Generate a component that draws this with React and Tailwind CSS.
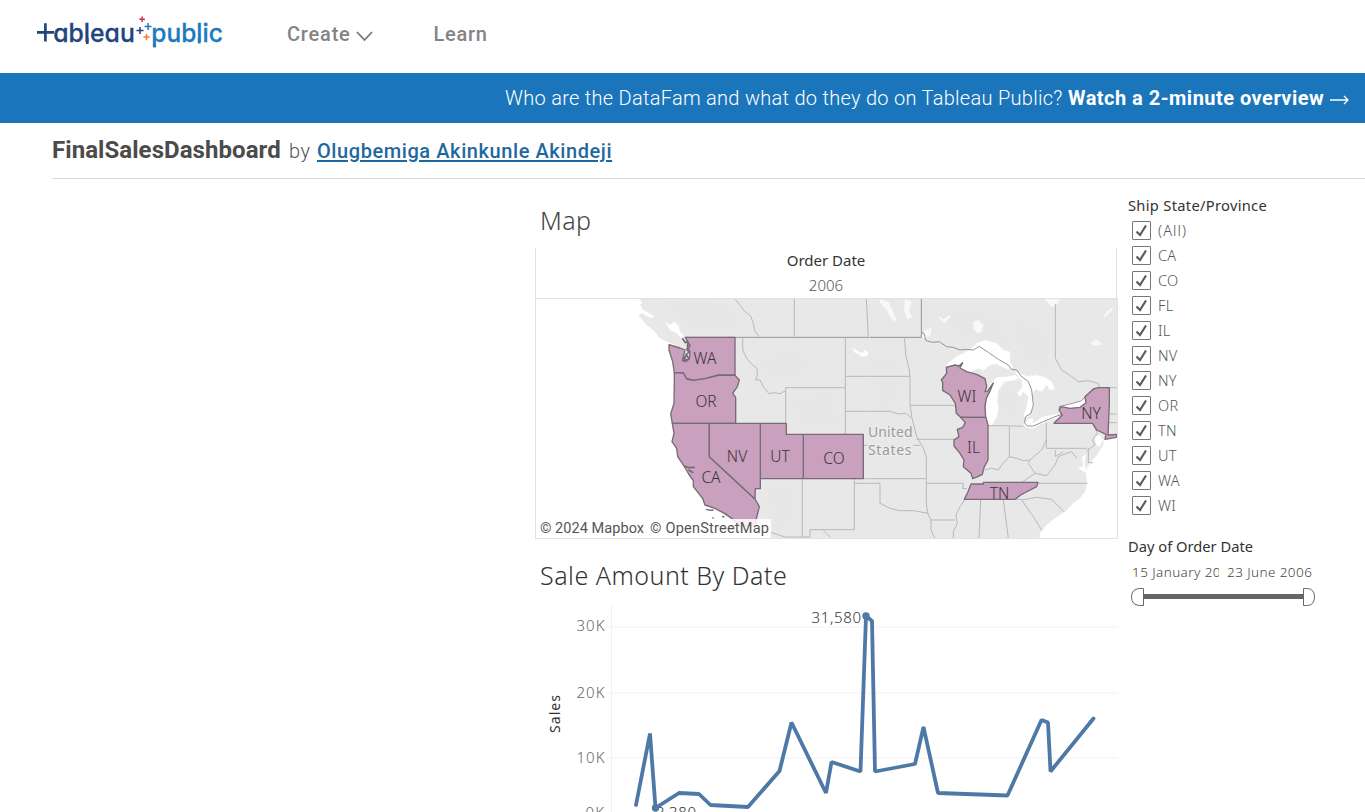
import React from "react";

const states = ["(All)", "CA", "CO", "FL", "IL", "NV", "NY", "OR", "TN", "UT", "WA", "WI"];
const T = { fontFamily: '"Noto Sans", sans-serif' };

function Logo() {
  return (
    <svg width="190" height="38" viewBox="35 12 190 38" className="block" fontFamily="Inter, sans-serif" fontWeight="500" role="img" aria-label="tableau public">
      <path d="M37 32.3H54M45.400 23.200V41.600" stroke="#1f447e" strokeWidth="2.700" fill="none" />
      <g className="[font-feature-settings:'cv11']" fontSize="25.500" strokeWidth=".3">
        <text x="53.300" y="41.5" textLength="81.500" lengthAdjust="spacingAndGlyphs" fill="#1f447e" stroke="#1f447e">ableau</text>
        <text x="151.300" y="41.5" textLength="71.500" lengthAdjust="spacingAndGlyphs" fill="#1c7ac0" stroke="#1c7ac0">public</text>
      </g>
      <path d="M87.300 38V44" stroke="#1f447e" strokeWidth="2.600" />
      <path d="M199.200 38V43.500" stroke="#1c7ac0" strokeWidth="2.600" />
      <path d="M154.500 44V47.500" stroke="#1c7ac0" strokeWidth="2.600" />
      <g fill="none" strokeWidth="1.5">
        <path d="M136.500 30.500h7M140 27v7" stroke="#1f447e" />
        <path d="M139.300 19.200h5.600M142.100 16.400v5.600" stroke="#d0304c" />
        <path d="M144.600 26.400h7M148.100 22.900v7" stroke="#1c7ac0" />
        <path d="M143.400 37.100h6.200M146.500 34v6.200" stroke="#f0803c" />
      </g>
    </svg>
  );
}

function UsMap() {
  return (
    <svg width="581" height="239" viewBox="536 299 581 239" className="block" style={T}>
      <rect x="536" y="299" width="581" height="240" fill="#fff" />
      <g transform="translate(630 290) scale(.333333)">
        <path fill="#e8e8e8" d="M28 27H750V760H430L420 735L310 690 290 680 270 665 250 652 225 645 210 620 192 590 190 572 176 552 160 525 143 500 140 475 126 455 132 430 127 400 122 372 132 340 133 270 133 240 128 215 117 180 117 165 145 168 118 158 90 145 72 122 50 105 25 75 35 70 65 85 72 78 40 60 30 45 38 38Z" />
        <path fill="#fff" d="M105 94L120 106 132 95 145 105 150 123 162 140 153 145 140 130 120 120Z" />
        <path fill="#e5e5e5" opacity=".5" d="M110 35L200 30 290 50 330 90 310 120 220 130 150 90ZM390 200L500 180 560 220 480 260 400 250ZM410 590L490 580 500 660 440 720ZM480 320L600 310 630 400 520 400Z" />
        <g fill="#fff">
          <path d="M667 174L680 180 687 187 700 188 705 180 717 188 710 198 695 200 687 193 675 188Z" />
          <path d="M733 265L742 262 738 280 748 292 745 310 733 305 738 292 732 282Z" />
        </g>
        <g fill="none" stroke="#b8b8b8" strokeWidth="3">
          <path stroke="#979797" d="M170 142H750" />
          <path d="M315 28L330 45 345 65 362 78 370 100 374 122 388 140M493 27V142M709 27L715 142M338 142V180L350 205 364 222 381 235 382 255 377 270 390 270 400 290 417 311 435 308 450 311 465 303M467 399V293H646M646 142V432M646 259H750M646 364H750M700 466H712M700 566H750M517 566V741M517 719M673 566V719H540V741H465L422 727M673 580H750M580 720L600 741" />
        </g>
        <g fill="#c9a0be" stroke="#776b75" strokeWidth="4" strokeLinejoin="round">
          <path d="M166 142H315V255H265L225 266 190 271 170 266 160 249 133 248 128 215 117 180V164L150 174 165 180 160 200 157 212 167 215 178 206 180 185 172 170 173 155Z" />
          <path d="M133 248L160 249 170 267 190 271 225 266 265 256H315L328 270 322 290 308 310 317 322V400H127L122 372 132 340 133 270Z" />
          <path d="M127 400H238V500L375 627 388 650 378 690V708H330L305 685 285 671 255 655 225 645 218 625 190 590V572L176 552 160 525 143 500 140 475 126 455 132 430Z" />
          <path d="M238 400H391V596H376L375 627 238 500ZM391 400H469V433H520V566H391ZM520 433H700V566H520Z" />
          <path fill="none" strokeWidth="5" d="M157 145L166 158 172 154 180 168 170 177 177 187 168 193 177 206 162 212 168 197 159 207M163 528L177 533 194 532M175 540L190 548" />
          <path d="M228 658L242 661 251 660M247 684L251 684M276 679L283 681" />
        </g>
      </g>

      <g transform="translate(870 290) scale(.333333)">
        <path fill="#e8e8e8" d="M-2 27H741V435L700 445 700 465 682 493 668 510 652 530 647 550 652 580 645 605 630 625 610 640 585 665 555 685 530 705 510 730 508 750H-2Z" />
        <path fill="#e5e5e5" opacity=".5" d="M190 50L300 60 380 90 420 160 360 150 260 130ZM430 70L540 150 530 240 450 200ZM480 510L600 570 540 600ZM0 200L100 220 90 340 20 350ZM370 330L420 280 450 330 420 390Z" />
        <g fill="#f8f8f8">
          <path d="M28 27L55 35 65 55 80 88 72 95 60 80 50 60 32 42ZM105 27L125 35 118 62 126 82 112 88 102 60ZM203 75L220 88 240 75 240 82 225 98 215 94ZM310 97L325 90 340 105 335 125 320 130 310 115ZM160 125L185 110 182 135 165 145 155 140ZM525 27L572 28 560 45 545 52ZM697 85L710 65 730 48 725 62 710 78ZM660 160L680 148 697 163 675 168Z" />
        </g>
        <g fill="#fff">
          <path d="M228 225L258 200 300 180 320 160 345 150 380 160 400 180 420 185 420 215 430 235 410 237 380 222 360 225 340 242 325 235 303 246 280 242 270 230 278 218 250 230Z" />
          <path d="M349 410L346 370 350 310 370 280 360 295 348 308 358 285 380 262 410 260 435 255 448 265 435 270 405 275 385 300 382 330 385 355 380 380 367 405Z" />
          <path d="M433 242L448 250 470 258 500 256 525 262 545 275 555 298 540 300 530 285 515 305 495 298 488 315 492 350 480 375 468 385 460 378 470 350 475 320 460 305 450 320 442 310 458 290 455 272Z" />
          <path d="M460 405L475 387 490 385 488 400 520 380 560 372 570 380 540 390 490 415 475 415ZM563 350L600 340 635 330 643 320 648 340 635 352 600 357 575 358Z" />
          <path d="M636 500L648 495 643 520 650 545 640 545 622 530 640 530ZM675 440L690 435 698 450 690 470 678 465Z" />
        </g>
        <g fill="none" stroke="#b8b8b8" strokeWidth="3">
          <path stroke="#939393" d="M0 142H154V27M154 127L162 130 168 152 188 157 208 155 230 170 250 172 270 180 290 178 310 180 328 169 355 187 385 208 415 225 425 238 440 240 453 258 475 275 485 300 490 345 483 370 467 380 463 398 472 408 490 408 520 395 555 380 574 374 567 350 600 342 635 332 650 315" />
          <path d="M103 142L108 200 118 240 120 270 120 340 125 380 140 440 160 475 169 500V640L173 670 183 690 183 720 195 745M0 259H118M0 364H60L85 372 108 370 125 385M120 346H255M140 448H252M130 466H150M0 566H169M0 580H30V640L60 655 90 662 130 662 175 670M169 580H280L278 596H291M183 690H256M345 407H400L460 409M418 409V500M345 540L365 535 385 540 395 525 418 500 440 505 460 512 480 510 515 480 529 450M529 398V475H650M455 578L495 550 475 520 480 510M495 550L530 557 555 525 565 500 590 490 605 485 620 505M556 480V500L580 485M505 580H652M556 42V205L575 240 605 260 625 275 655 272 685 280 688 290M552 400H668M668 400L682 430 667 450 675 465 650 482M655 475V518H670M718 293H740M720 372H740M715 398H740M285 628L270 650 258 675 262 700 250 725 250 745M332 630L327 745M400 630L415 745M455 630L490 680 515 720M455 630L500 622 545 628 582 665M435 628H455" />
        </g>
        <g fill="#c9a0be" stroke="#776b75" strokeWidth="4" strokeLinejoin="round">
          <path d="M229 232L255 225 267 228 278 218 270 234 290 245 320 253 345 266 350 290 345 305 352 304 370 279 359 305 349 325 345 350 347 382H272L259 370 256 340 240 315 218 301V277L214 270 230 250Z" />
          <path d="M272 382H348L354 405V510L343 530 337 553 325 559 308 566 303 550 280 530 282 510 270 490 252 468 252 450 267 440 262 418 278 412 286 398Z" />
          <path d="M303 582H340V577H504L500 590 475 603 455 613 435 628H283L294 605Z" />
          <path d="M574 350L600 355 630 352 648 338 645 320 670 297 685 293H718V340L714 435 741 433 739 442 705 448 708 433 680 420 668 400H552L577 375 567 360Z" />
        </g>
      </g>
      <g fontSize="15.500" fill="#3c333a" textAnchor="middle" fontWeight="300">
        <text x="705" y="363.500">WA</text><text x="706" y="406.500">OR</text><text x="737" y="461.500">NV</text>
        <text x="780" y="461.500">UT</text><text x="834" y="463.500">CO</text><text x="711" y="482.500">CA</text>
        <text x="967" y="401.500">WI</text><text x="973.500" y="452.500">IL</text><text x="1091" y="418.500">NY</text><text x="999.500" y="498.500">TN</text>
      </g>
      <g fontSize="14" fill="#9a9a9a" stroke="#eee" strokeWidth="2" paintOrder="stroke">
        <text x="868" y="437" textLength="44.500">United</text><text x="868" y="454.500" textLength="43.500">States</text>
      </g>
      <rect x="536" y="519" width="235" height="20" fill="#fff" opacity=".85" />
      <g fontFamily="Roboto, sans-serif" fontSize="14.500" fill="#555">
        <text x="540" y="533" textLength="104">© 2024 Mapbox</text><text x="650" y="533" textLength="119">© OpenStreetMap</text>
      </g>
    </svg>
  );
}

function SalesChart() {
  return (
    <svg width="583" height="208" viewBox="535 604 583 208" className="block" style={T}>
      <path d="M611.500 605V812M606 627H1118M606 693H1118M606 758H1118" stroke="#f1f1f1" fill="none" />
      <g fontSize="15" fill="#666" fontWeight="300">
        <text x="576.500" y="631" textLength="28">30K</text><text x="576.500" y="698" textLength="28">20K</text>
        <text x="576.500" y="763" textLength="28">10K</text><text x="585.500" y="818" textLength="18.500">0K</text>
        <text transform="translate(560 733) rotate(-90)" fontSize="14" fill="#333" fontWeight="400" textLength="38">Sales</text>
        <text x="811.500" y="623" fill="#333" textLength="49.500">31,580</text>
        <text x="656" y="818" fill="#333" textLength="40">3,380</text>
      </g>
      <path d="M636 805L650 733.500 655.500 808 679 793 699 794 710.500 805 748 807 779.500 771 791.500 722.500 826 793 831.500 762 860.500 771.500 866 616 872 621 875 771.500 915 764 923.500 727 938 793 1007.500 795.500 1041.500 720 1048 722.500 1050.500 771.500 1093.500 718.500" fill="none" stroke="#4e79a7" strokeWidth="3.800" strokeLinejoin="bevel" strokeLinecap="round" />
      <circle cx="866" cy="616" r="3.700" fill="#4e79a7" /><circle cx="655.500" cy="808" r="3.700" fill="#4e79a7" />
    </svg>
  );
}

function Filters() {
  return (
    <aside className="ml-[10px] w-[200px] pt-[16px] text-[15px] text-[#333]" style={T}>
      <h3 className="h-[23px] text-[14.700px] leading-[20px] tracking-[0.300px] whitespace-nowrap">Ship State/Province</h3>
      <ul>
        {states.map((s) => (
          <li key={s} className="flex h-[25px] items-center gap-[7px] pl-1 font-light text-[#555]">
            <span className="flex size-[19px] items-center justify-center rounded-[1px] border-[1.500px] border-[#777]">
              <svg width="13" height="13" viewBox="0 0 13 13" fill="none" stroke="#5c5c5c" strokeWidth="2.200"><path d="M1.500 7.500L5 11L11 1.500" /></svg>
            </span>
            <span className={s === "(All)" ? "-mt-[2px] text-[14.500px] leading-[20px] tracking-[1.100px]" : "-mt-[2px] text-[14.500px] leading-[20px] tracking-[0.300px]"}>{s}</span>
          </li>
        ))}
      </ul>
      <h3 className="mt-[17px] h-[27px] text-[14.700px] leading-[22px] whitespace-nowrap">Day of Order Date</h3>
      <div className="flex h-[25px] pl-[4px] text-[13.500px] leading-[20px] font-light tracking-[0.420px] whitespace-nowrap text-[#444]">
        <span className="w-[87px] overflow-hidden">15 January 2006</span>
        <span className="ml-2">23 June 2006</span>
      </div>
      <svg width="186" height="20" viewBox="0 0 186 20" className="ml-[3px] block">
        <path d="M12 9.500H174" stroke="#666" strokeWidth="5" />
        <path d="M12.500 1.500H8.500Q.500 2 .500 10T8.500 18.500H12.500ZM172.500 1.500H176.500Q183.500 2 183.500 10T176.500 18.500H172.500Z" fill="#fff" stroke="#666" />
      </svg>
    </aside>
  );
}

export default function App() {
  return (
    <div className="h-[812px] w-[1365px] overflow-hidden bg-white font-[Roboto,sans-serif]">
      <header className="flex h-[73px] pt-3 pl-[35px]">
        <Logo />
        <nav className="flex pt-[9px] text-[20px] leading-[26px] font-medium text-[#848484]">
          <a className="ml-[62px] flex w-[146px] items-start tracking-[0.800px]">
            Create
            <svg width="17" height="11" viewBox="0 0 17 11" className="mt-[10px] ml-[5px]" fill="none" stroke="#777" strokeWidth="1.800"><path d="M1 1L8.500 9L16 1" /></svg>
          </a>
          <a className="pl-[0.500px] tracking-[0.750px]">Learn</a>
        </nav>
      </header>
      <div className="flex h-[50px] items-center justify-end bg-[#1b75bb] pr-[15px] text-[20px] leading-[26px] whitespace-nowrap text-white">
        <span className="w-[563px] font-light tracking-[0.285px]">Who are the DataFam and what do they do on Tableau Public?</span>
        <b className="w-[262px] tracking-[0.480px]">Watch a 2-minute overview</b>
        <svg width="20" height="10" viewBox="0 0 20 10" className="mt-1" fill="none" stroke="#fff" strokeWidth="1.300"><path d="M0 5H18M14 1L18 5L14 9" /></svg>
      </div>
      <div className="ml-[52px] flex h-[56px] items-baseline border-b border-[#d8d8d8] pt-[12px] whitespace-nowrap">
        <h1 className="w-[237px] text-[24px] leading-[30px] font-bold tracking-[0.060px] text-[#4b4b4b]">FinalSalesDashboard</h1>
        <span className="w-[28px] text-[20px] font-light tracking-[0.500px] text-[#555]">by</span>
        <a className="text-[20px] font-medium tracking-[0.580px] text-[#1f689f] underline decoration-2 underline-offset-2">Olugbemiga Akinkunle Akindeji</a>
      </div>
      <main className="flex h-[633px] pl-[535px]" style={T}>
        <section className="w-[583px]">
          <h2 className="h-[69px] pt-[24px] pl-[5px] text-[25px] leading-[34px] font-light tracking-[0.450px] text-[#444]">Map</h2>
          <div className="w-[582px] border-x border-[#e2e2e2] text-center text-[15px] leading-[25px]">
            <div className="h-[25px] text-[#333]">Order Date</div>
            <div className="h-[25px] font-light text-[#555]">2006</div>
          </div>
          <div className="h-[241px] w-[583px] border border-[#e2e2e2]"><UsMap /></div>
          <h2 className="h-[65px] pt-[19px] pl-[5px] text-[25px] leading-[34px] font-light tracking-[0.500px] text-[#333]">Sale Amount By Date</h2>
          <SalesChart />
        </section>
        <Filters />
      </main>
    </div>
  );
}
